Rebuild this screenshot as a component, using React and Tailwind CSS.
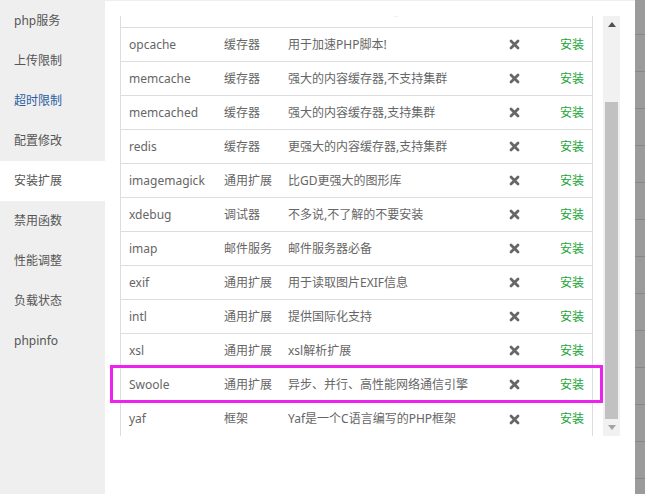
import { useLayoutEffect, useRef } from 'react';

const menu = ['php服务', '上传限制', '超时限制', '配置修改', '安装扩展', '禁用函数', '性能调整', '负载状态', 'phpinfo'];

const rows = [
  ['ioncube', '通用扩展', '用于解密ionCube Encoder加密脚本!'],
  ['fileinfo', '通用扩展', '获取文件MIME类型信息'],
  ['opcache', '缓存器', '用于加速PHP脚本!'],
  ['memcache', '缓存器', '强大的内容缓存器,不支持集群'],
  ['memcached', '缓存器', '强大的内容缓存器,支持集群'],
  ['redis', '缓存器', '更强大的内容缓存器,支持集群'],
  ['imagemagick', '通用扩展', '比GD更强大的图形库'],
  ['xdebug', '调试器', '不多说,不了解的不要安装'],
  ['imap', '邮件服务', '邮件服务器必备'],
  ['exif', '通用扩展', '用于读取图片EXIF信息'],
  ['intl', '通用扩展', '提供国际化支持'],
  ['xsl', '通用扩展', 'xsl解析扩展'],
  ['Swoole', '通用扩展', '异步、并行、高性能网络通信引擎'],
  ['yaf', '框架', 'Yaf是一个C语言编写的PHP框架'],
];

const XIcon = () => (
  <svg width="11" height="11" viewBox="0 0 11 11">
    <path d="M2 2 L9 9 M9 2 L2 9" stroke="#666" strokeWidth="2.8" strokeLinecap="round" />
  </svg>
);

export default function App() {
  const scroller = useRef(null);
  useLayoutEffect(() => {
    if (scroller.current) scroller.current.scrollTop = 91;
  }, []);

  return (
    <div
      className="flex h-[494px] w-[645px] overflow-hidden bg-white text-[12px]"
      style={{ fontFamily: '"Noto Sans", "Noto Sans CJK SC", sans-serif' }}
    >
      {/* Sidebar */}
      <aside className="w-[105px] shrink-0 bg-[#efefef] pt-px">
        {menu.map((m) => (
          <div
            key={m}
            className={`flex h-[40px] items-center pl-[14px] ${
              m === '安装扩展' ? 'bg-white text-[#555]' : m === '超时限制' ? 'text-[#2a5ea0]' : 'text-[#555]'
            }`}
          >
            {m}
          </div>
        ))}
      </aside>

      {/* Main */}
      <main className="relative w-[530px] shrink-0 border-t border-[#eee] pl-[15px] pt-[15px]">
        <div className="flex gap-[10px]">
          <div ref={scroller} className="h-[420px] w-[473px] overflow-hidden">
            <div className="border border-[#ddd] text-[#666]">
              <div className="flex h-[34px] items-center border-b border-[#ddd] bg-[#f6f6f6]">
                <div className="w-[95px] pl-[8px]">名称</div>
                <div className="w-[64px] pl-[8px]">类型</div>
                <div className="flex-1 pl-[8px]">说明</div>
                <div className="w-[48px] text-center">状态</div>
                <div className="w-[54px] pr-[8px] text-right">操作</div>
              </div>
              {rows.map(([name, type, desc], i) => (
                <div
                  key={name}
                  className={`flex h-[34px] items-center ${i < rows.length - 1 ? 'border-b border-[#ddd]' : ''}`}
                >
                  <div className="w-[95px] pl-[8px]">{name}</div>
                  <div className="w-[64px] pl-[8px]">{type}</div>
                  <div className="flex-1 whitespace-nowrap pl-[8px]">{desc}</div>
                  <div className="flex w-[48px] justify-center">
                    <XIcon />
                  </div>
                  <div className="w-[54px] pr-[8px] text-right text-[#20a53a]">安装</div>
                </div>
              ))}
            </div>
          </div>

          {/* Scrollbar */}
          <div className="flex h-[420px] w-[17px] flex-col bg-[#f1f1f1]">
            <div className="flex h-[17px] items-center justify-center">
              <svg width="8" height="5" viewBox="0 0 8 5">
                <path d="M0 5 L4 0 L8 5 Z" fill="#505050" />
              </svg>
            </div>
            <div className="flex-1 px-[2px] pt-[69px]">
              <div className="h-full bg-[#c1c1c1]" />
            </div>
            <div className="flex h-[17px] items-center justify-center">
              <svg width="8" height="5" viewBox="0 0 8 5">
                <path d="M0 0 L8 0 L4 5 Z" fill="#a3a3a3" />
              </svg>
            </div>
          </div>
        </div>

        {/* Highlight annotation */}
        <div className="absolute left-[5px] top-[364px] h-[38px] w-[493px] border-[3px] border-[#ee22ee]" />
      </main>

      {/* Backdrop strip */}
      <div className="flex-1 bg-[#9b9b9b]">
        <div className="flex flex-col pt-[34px]">
          {Array.from({ length: 13 }).map((_, i) => (
            <div key={i} className="h-[37px] border-t border-[#888]" />
          ))}
        </div>
      </div>
    </div>
  );
}
